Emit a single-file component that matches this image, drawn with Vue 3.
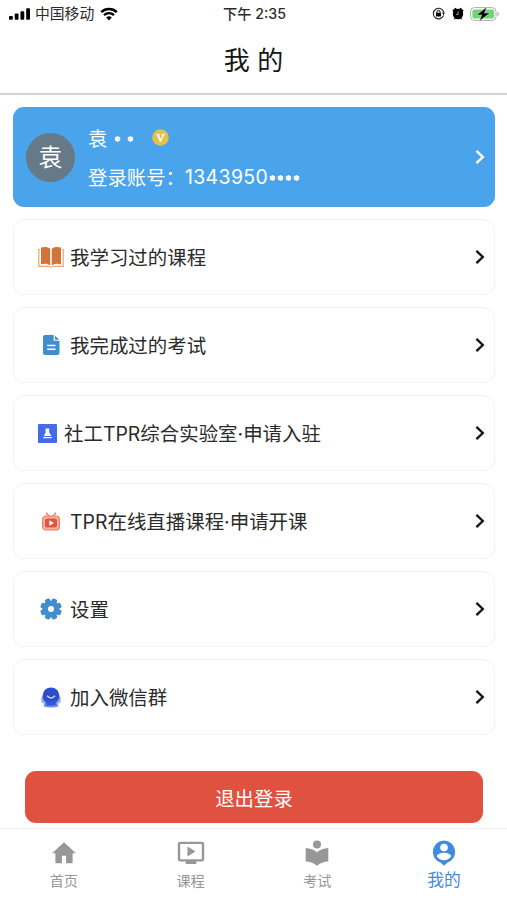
<script setup>
import { ref } from 'vue';

const rows = [
  { icon: 'book', title: '我学习过的课程' },
  { icon: 'doc', title: '我完成过的考试' },
  { icon: 'lab', title: '社工TPR综合实验室·申请入驻' },
  { icon: 'live', title: 'TPR在线直播课程·申请开课' },
  { icon: 'gear', title: '设置' },
  { icon: 'group', title: '加入微信群' },
];

const tabs = [
  { name: 'home', label: '首页' },
  { name: 'course', label: '课程' },
  { name: 'exam', label: '考试' },
  { name: 'mine', label: '我的' },
];
const current = ref('mine');
</script>

<template>
<div class="page">
  <div class="status">
    <div class="status-left">
      <svg class="signal" viewBox="0 0 22 12">
        <rect x="0" y="8" width="4" height="4" rx="1" />
        <rect x="6" y="5.5" width="4" height="6.5" rx="1" />
        <rect x="12" y="3" width="4" height="9" rx="1" />
        <rect x="18" y="0" width="4" height="12" rx="1" />
      </svg>
      <span class="carrier">中国移动</span>
      <svg class="wifi" viewBox="0 0 18 13">
        <path d="M1.2 4.6a11.3 11.3 0 0 1 15.6 0" fill="none" stroke="#000" stroke-width="2.6" />
        <path d="M4 7.7a7.3 7.3 0 0 1 10 0" fill="none" stroke="#000" stroke-width="2.3" />
        <path d="M6.2 10a4.3 4.3 0 0 1 5.6 0L9 13z" />
      </svg>
    </div>
    <div class="clock">下午 2:35</div>
    <div class="status-right">
      <svg class="lock" viewBox="0 0 13 13">
        <path d="M11.6 8.4A5.3 5.3 0 1 1 11.7 5" fill="none" stroke="#222" stroke-width="1.1" />
        <path d="M10 5.6h3l-1.4 2.3z" />
        <rect x="4" y="5.8" width="5" height="3.7" rx=".5" />
        <path d="M5 6V4.8a1.5 1.5 0 0 1 3 0V6" fill="none" stroke="#000" />
      </svg>
      <svg class="alarm" viewBox="0 0 12 13">
        <circle cx="6" cy="7" r="5.2" />
        <path d="M.3 3.8 3.3.8l2 1.5L1.5 5zM11.7 3.8l-3-3-2 1.5L10.5 5zM1.5 12.8l1.7-2.6 1.5 1zM10.5 12.8l-1.7-2.6-1.5 1z" />
        <path d="M6.2 4.4v3H4" fill="none" stroke="#bbb" stroke-width=".8" />
      </svg>
      <svg class="battery" viewBox="0 0 30 14">
        <rect x=".6" y=".6" width="25.4" height="12.8" rx="3.8" fill="#fff" stroke="#a9b0a9" />
        <rect x="2.4" y="2.4" width="21.8" height="9.2" rx="2.2" fill="#6fd477" />
        <path d="M27.4 5v4.2c2-.7 2-3.5 0-4.2z" fill="#aaa" />
        <path d="M16.8 0 6.8 7.9h5L9.400 14l10.400-8h-5.400z" stroke="#d8f5da" stroke-width=".4" />
      </svg>
    </div>
  </div>

  <div class="header">我 的</div>

  <div class="content">
    <div class="profile">
      <div class="avatar">袁</div>
      <div class="info">
        <div class="name">
          <span>袁</span>
          <svg class="stars" viewBox="0 0 20 8">
            <g stroke="#fff" stroke-width="1.6">
              <path d="M3.500 1v6M.9 2.500l5.200 3M6.100 2.500l-5.200 3" />
              <path d="M16.500 1v6M13.900 2.500l5.200 3M19.100 2.500l-5.200 3" />
            </g>
          </svg>
          <svg class="vip" viewBox="0 0 17 17">
            <circle cx="8.5" cy="8.5" r="8.3" fill="#e5c04d" />
            <path d="M4 5h4v1l-.8.2 1.7 4 1.5-4L9.5 6V5H13v1l-.9.3L9 12.8H7.8L4.9 6.3 4 6z" fill="#fffbe8" />
          </svg>
        </div>
        <div class="account">
          <span>登录账号：</span><span class="number">1343950</span>
          <svg class="mask" viewBox="0 0 32 8">
            <g stroke="#fff" stroke-width="1.6">
              <path v-for="n in 4" :key="n" :transform="`translate(${n * 8 - 8} 0)`" d="M3.500 1v6M.9 2.500l5.200 3M6.100 2.500l-5.200 3" />
            </g>
          </svg>
        </div>
      </div>
      <svg class="arrow" viewBox="0 0 10 16"><path d="M1.4 1.8 7.8 8l-6.4 6.2" /></svg>
    </div>

    <div v-for="r in rows" :key="r.icon" class="row">
      <div class="row-icon" :class="r.icon">
        <svg v-if="r.icon === 'book'" width="26" height="22" viewBox="0 0 26 22">
          <path d="M2.2 3.5H.8v16.8h9.7l2.5.9 2.5-.9h9.7V3.5h-1.4" fill="none" stroke="#eda477" stroke-width="1.2" />
          <path d="M3 1.6C6.5.4 10 .8 12.2 2.8v16.5c-2.5-1.8-6-2-9.2-.9z" fill="#d2733a" />
          <path d="M23 1.6C19.5.4 16 .8 13.8 2.8v16.5c2.5-1.8 6-2 9.2-.9z" fill="#d2733a" />
        </svg>
        <svg v-else-if="r.icon === 'doc'" width="17" height="20" viewBox="0 0 17 20">
          <path d="M2 0h8.7v5.8h5.8V18a2 2 0 0 1-2 2H2a2 2 0 0 1-2-2V2a2 2 0 0 1 2-2z" fill="#438dcd" />
          <path d="M11.9.4 16.2 4.7h-4.3z" fill="#438dcd" />
          <path d="M4.2 10.5h8.3M4.2 14.2h8.3" stroke="#fff" stroke-width="1.4" />
        </svg>
        <svg v-else-if="r.icon === 'lab'" width="19" height="19" viewBox="0 0 19 19">
          <rect width="19" height="19" rx="1" fill="#416de9" />
          <path d="M7.6 4.4h3.6v4L13.400 12H5.800l1.800-3.600z" fill="#fff" />
          <path d="M5.200 13.600h8.600" stroke="#fff" stroke-width="1.200" />
        </svg>
        <svg v-else-if="r.icon === 'live'" width="18" height="19" viewBox="0 0 18 19">
          <path d="m4 .8 3.2 3.4M14 .8l-3.2 3.4" stroke="#e67962" stroke-width="1.3" />
          <rect x=".6" y="4.2" width="16.8" height="13.6" rx="3" fill="#f6b4a2" stroke="#eb806a" stroke-width="1.2" />
          <rect x="3" y="6.4" width="12" height="9.2" rx="1.8" fill="#df5541" />
          <path d="m7.4 8.3 4.5 2.7-4.5 2.7z" fill="#fff" />
        </svg>
        <svg v-else-if="r.icon === 'gear'" width="22" height="22" viewBox="0 0 22 22">
          <g fill="#438dcd">
            <rect v-for="n in 4" :key="n" x="8.3" y=".2" width="5.4" height="21.6" rx="1.6" :transform="`rotate(${n * 45 + 22.5} 11 11)`" />
            <circle cx="11" cy="11" r="8.6" />
          </g>
          <circle cx="11" cy="11" r="3" fill="#fff" />
        </svg>
        <svg v-else width="20" height="21" viewBox="0 0 20 21">
          <ellipse cx="3" cy="12.5" rx="2.8" ry="4" fill="#8eabf0" />
          <ellipse cx="17" cy="12.5" rx="2.8" ry="4" fill="#8eabf0" />
          <path d="M3.5 16h13l1 3.6q-7.5 1.8-15 0z" fill="#6d8fee" />
          <circle cx="10" cy="8.8" r="8.4" fill="#2d4ccd" />
          <path d="M4.8 14h10.4l-.8 4.6H5.6z" fill="#3455d8" />
          <path d="M6 8.8q4 4.4 8 0" fill="none" stroke="#c9d8ff" stroke-width="1.4" />
        </svg>
      </div>
      <div class="row-title">{{ r.title }}</div>
      <svg class="arrow" viewBox="0 0 10 16"><path d="M1.4 1.8 7.8 8l-6.4 6.2" /></svg>
    </div>

    <button class="logout">退出登录</button>
  </div>

  <div class="tabbar">
    <div
        v-for="t in tabs"
        :key="t.name"
        :class="{tab: true, active: current === t.name}"
        @click="current = t.name"
    >
      <svg v-if="t.name === 'home'" class="tab-icon" viewBox="0 0 28 28">
        <path d="M14 3.2 2.1 14.3h3.3v9.9h6.5v-7.4h4.2v7.4h6.5v-9.9h3.3z" />
      </svg>
      <svg v-else-if="t.name === 'course'" class="tab-icon" viewBox="0 0 28 28">
        <path d="M3.1 2.7h21.8a2.3 2.3 0 0 1 2.3 2.3v15.2a2.3 2.3 0 0 1-2.3 2.3h-5.6v2.6H8.7v-2.6H3.1A2.3 2.3 0 0 1 .8 20.2V5a2.3 2.3 0 0 1 2.3-2.3zm.1 2.3v15.2h21.6V5z" fill-rule="evenodd" />
        <path d="m10.5 7.6 8 5-8 5z" />
      </svg>
      <svg v-else-if="t.name === 'exam'" class="tab-icon" viewBox="0 0 28 28">
        <circle cx="14" cy="5.4" r="4" />
        <path d="M2.7 9c4.5.2 8.400 1.600 11.300 4.400C16.900 10.600 20.800 9.200 25.300 9v13.500c-4.500.2-8.400 1.600-11.300 4.200-2.900-2.600-6.800-4-11.300-4.200z" />
      </svg>
      <svg v-else class="tab-icon" viewBox="0 0 28 28">
        <path d="M14 1.5A11.3 11.3 0 0 0 10.5 23.5L14 26.8l3.5-3.3A11.3 11.3 0 0 0 14 1.5z" />
        <circle cx="14" cy="8.5" r="3.8" fill="#fff" />
        <path d="M6.8 17.5c1-4.9 13.4-4.9 14.4 0-3.2 4.9-11.2 4.9-14.4 0z" fill="#fff" />
      </svg>
      <div class="tab-label">{{ t.label }}</div>
    </div>
  </div>
</div>
</template>

<style>
body {
  margin: 0;
  background-color: #FFF;
}
</style>

<style scoped>
.page {
  display: flex;
  flex-direction: column;
  height: 900px;
  overflow: hidden;
  font-family: Inter, "Noto Sans CJK SC", sans-serif;
  color: #2B2B2B;
}
svg {
  display: block;
  flex-shrink: 0;
}
.status {
  display: grid;
  grid-template-columns: 1fr auto 1fr;
  align-items: center;
  height: 27px;
  padding: 0 7px 0 9px;
}
.status-left,
.status-right {
  display: flex;
  align-items: center;
}
.status-right {
  justify-content: flex-end;
}
.signal {
  width: 21px;
  height: 12px;
}
.carrier {
  margin: 0 6px 0 5px;
  font-size: 14.8px;
  line-height: 20px;
}
.wifi {
  width: 18px;
  height: 14px;
}
.clock {
  font-size: 14.2px;
  font-weight: 500;
  line-height: 20px;
}
.lock {
  width: 13px;
  height: 13px;
}
.alarm {
  width: 12px;
  height: 13px;
  margin: 0 6px 0 7px;
}
.battery {
  width: 30px;
  height: 14px;
}
.header {
  height: 64px;
  padding-top: 2px;
  border-bottom: 2px solid #D3D3D3;
  font-size: 26px;
  line-height: 64px;
  text-align: center;
  color: #151515;
}
.content {
  display: flex;
  flex-direction: column;
  gap: 12px;
  padding: 12px 12px 0 13px;
}
.profile {
  display: flex;
  align-items: center;
  height: 100px;
  padding: 0 10px 0 13px;
  box-sizing: border-box;
  border-radius: 11px;
  background-color: #4AA4EC;
  color: #FFF;
}
.avatar {
  width: 49px;
  height: 49px;
  margin-right: 13px;
  border-radius: 50%;
  background-color: #657986;
  font-size: 24px;
  line-height: 49px;
  text-align: center;
}
.info {
  flex: 1;
}
.name,
.account {
  display: flex;
  align-items: center;
  height: 39px;
  font-size: 19.4px;
}
.stars {
  width: 20px;
  height: 8px;
  margin: 2px 18px 0 6.5px;
}
.vip {
  width: 17px;
  height: 17px;
}
.number {
  letter-spacing: .4px;
}
.mask {
  width: 32px;
  height: 8px;
  margin: 2px 0 0 1px;
}
.arrow {
  width: 10px;
  height: 16px;
  fill: none;
  stroke: #171717;
  stroke-width: 2.4;
}
.profile .arrow {
  stroke: #FFF;
}
.row {
  display: flex;
  align-items: center;
  height: 76px;
  padding: 0 9px 0 24px;
  box-sizing: border-box;
  border: 1px solid #F2F2F2;
  border-radius: 11px;
}
.row-icon {
  display: flex;
  justify-content: center;
  width: 26px;
  margin-right: 6px;
}
.row-icon.lab {
  justify-content: flex-start;
  width: 20px;
}
.row-title {
  flex: 1;
  padding-top: 2px;
  font-size: 19.45px;
  line-height: 28px;
}
.logout {
  height: 52px;
  margin: 24px 12px 0;
  padding: 0;
  border: none;
  border-radius: 11px;
  background-color: #E05140;
  font-family: inherit;
  font-size: 19.4px;
  color: #FFF;
  cursor: pointer;
}
.tabbar {
  display: flex;
  height: 72px;
  margin-top: auto;
  box-sizing: border-box;
  border-top: 1px solid #F4F4F4;
}
.tab {
  display: flex;
  flex: 1;
  flex-direction: column;
  align-items: center;
  padding: 10px 0 0 1px;
  color: #979797;
  cursor: pointer;
}
.tab-icon {
  width: 28px;
  height: 28px;
  fill: currentColor;
}
.tab-label {
  font-size: 14.2px;
  line-height: 28px;
}
.tab.active {
  color: #3F8CDE;
}
.tab.active .tab-label {
  font-size: 16.8px;
  line-height: 27px;
}
</style>
